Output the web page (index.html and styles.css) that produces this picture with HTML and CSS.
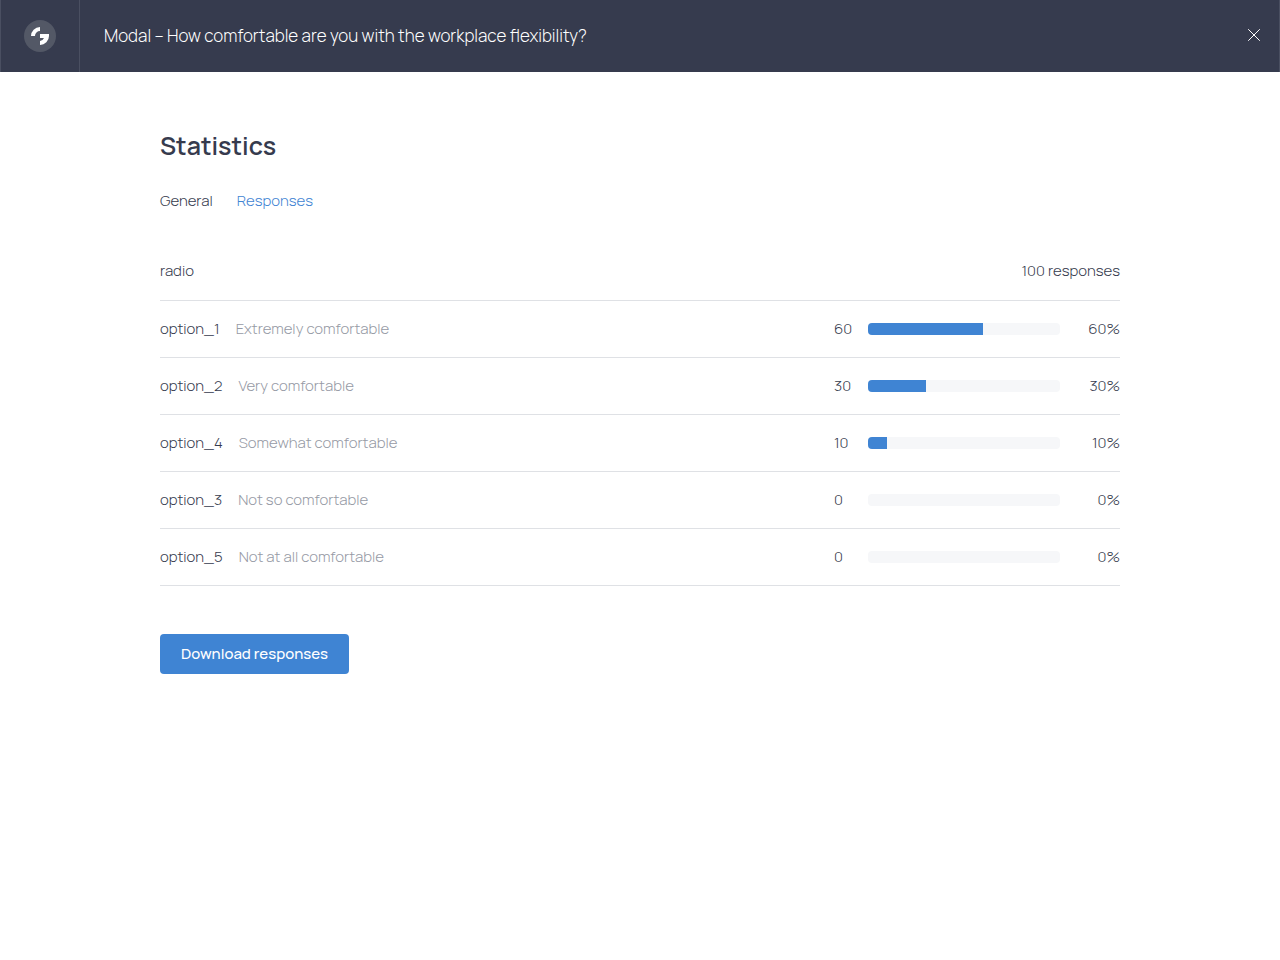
FILE: index.html
```html
<!DOCTYPE html>
<html lang="en">
<head>
    <meta charset="UTF-8">
    <meta name="viewport" content="width=device-width, initial-scale=1.0">
    <title>Statistics</title>
    <link rel="stylesheet" href="styles.css">
</head>
<body>

<header class="topbar">
    <a class="logo" href="#" aria-label="Home">
        <svg width="32" height="32" viewBox="0 0 32 32">
            <circle cx="16" cy="16" r="16" fill="#535866"/>
            <path fill="#fff" d="M7 16a9 9 0 0 1 9-9v4a5 5 0 0 0-5 5z"/>
            <path fill="#fff" d="M16 14h9v2a9 9 0 0 1-9 9v-4a5 5 0 0 0 4-3h-4z"/>
        </svg>
    </a>
    <div class="topbar-title">Modal – How comfortable are you with the workplace flexibility?</div>
    <button class="close" type="button" aria-label="Close">
        <svg width="12" height="12" viewBox="0 0 12 12" fill="none" stroke="#fff" stroke-linecap="round">
            <path d="M.5.5l11 11M11.5.5l-11 11"/>
        </svg>
    </button>
</header>

<main class="container">
    <h1>Statistics</h1>

    <nav class="tabs">
        <a href="#">General</a>
        <a class="active" href="#">Responses</a>
    </nav>

    <table class="results">
        <thead>
            <tr>
                <th>radio</th>
                <th class="total" colspan="3">100 responses</th>
            </tr>
        </thead>
        <tbody>
            <tr>
                <td>option_1 <span class="answer">Extremely comfortable</span></td>
                <td class="count">60</td>
                <td class="chart"><div class="bar"><div class="fill" style="width: 60%"></div></div></td>
                <td class="percent">60%</td>
            </tr>
            <tr>
                <td>option_2 <span class="answer">Very comfortable</span></td>
                <td class="count">30</td>
                <td class="chart"><div class="bar"><div class="fill" style="width: 30%"></div></div></td>
                <td class="percent">30%</td>
            </tr>
            <tr>
                <td>option_4 <span class="answer">Somewhat comfortable</span></td>
                <td class="count">10</td>
                <td class="chart"><div class="bar"><div class="fill" style="width: 10%"></div></div></td>
                <td class="percent">10%</td>
            </tr>
            <tr>
                <td>option_3 <span class="answer">Not so comfortable</span></td>
                <td class="count">0</td>
                <td class="chart"><div class="bar"></div></td>
                <td class="percent">0%</td>
            </tr>
            <tr>
                <td>option_5 <span class="answer">Not at all comfortable</span></td>
                <td class="count">0</td>
                <td class="chart"><div class="bar"></div></td>
                <td class="percent">0%</td>
            </tr>
        </tbody>
    </table>

    <button class="download" type="button">Download responses</button>
</main>

</body>
</html>
```
FILE: styles.css
```css
* {
    box-sizing: border-box;
}
body {
    margin: 0;
    font-family: Manrope, Inter, sans-serif;
    font-size: 15px;
    font-weight: 300;
    line-height: 24px;
    color: #363b4e;
    background-color: #fff;
}
a {
    color: inherit;
    text-decoration: none;
}
button {
    border: none;
    font-family: inherit;
    cursor: pointer;
}
svg {
    display: block;
}
.topbar {
    display: flex;
    align-items: center;
    height: 72px;
    background-color: #363b4e;
    border-left: 1px solid #4a4f61;
    border-right: 1px solid #4a4f61;
    color: #fff;
}
.logo {
    display: flex;
    align-items: center;
    justify-content: center;
    width: 79px;
    height: 100%;
    border-right: 1px solid #4a4f61;
}
.topbar-title {
    flex: 1;
    padding: 0 24px;
    font-size: 17px;
}
.close {
    padding: 16px 19px 18px;
    background: none;
}
.container {
    max-width: 1008px;
    margin: 0 auto;
    padding: 56px 24px;
}
h1 {
    margin: 0 0 25px;
    font-size: 25px;
    font-weight: 600;
    line-height: 36px;
}
.tabs {
    display: flex;
    gap: 24px;
    margin-bottom: 30px;
}
.tabs .active {
    color: #3f84d3;
}
.results {
    width: 100%;
    border-collapse: separate;
    border-spacing: 0;
}
.results th,
.results td {
    padding: 16px 0;
    border-bottom: 1px solid #dfe1e5;
    text-align: left;
    font-weight: 300;
}
.results thead th {
    padding-bottom: 17px;
}
.results .total,
.results .percent {
    text-align: right;
}
.answer {
    margin-left: 13px;
    color: #969aa5;
}
.count {
    width: 34px;
}
.chart {
    width: 192px;
}
.percent {
    width: 60px;
}
.bar {
    height: 12px;
    border-radius: 4px;
    background-color: #f6f7f9;
    overflow: hidden;
}
.fill {
    height: 100%;
    background-color: #3f84d3;
}
.download {
    height: 40px;
    margin-top: 48px;
    padding: 0 21px;
    border-radius: 4px;
    background-color: #3f84d3;
    color: #fff;
    font-size: 15px;
    font-weight: 500;
    line-height: 24px;
}
.download:hover {
    background-color: #3474bf;
}
```
